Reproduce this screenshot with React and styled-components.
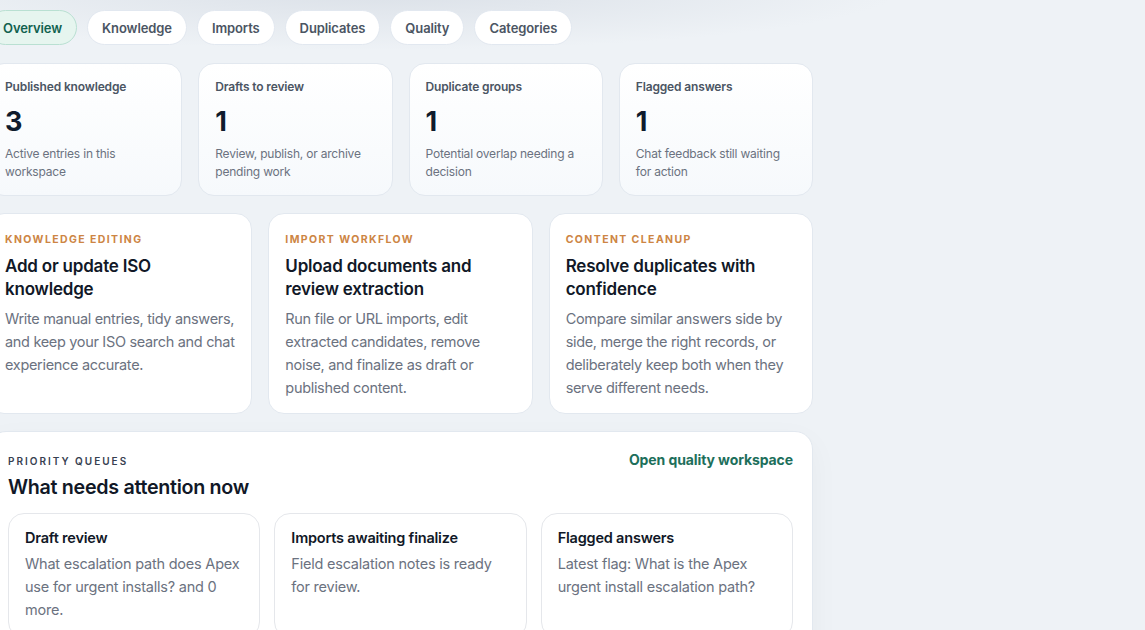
import React from "react";
import styled, { createGlobalStyle } from "styled-components";

const Global = createGlobalStyle`
  html, body { margin: 0; padding: 0; }
  body {
    background: #eef2f6;
    font-family: Inter, "Noto Sans", sans-serif;
    color: #0f172a;
    overflow: hidden;
    -webkit-font-smoothing: antialiased;
  }
  #root { min-height: 630px; }
`;

const Page = styled.div`
  min-height: 630px;
  background:
    radial-gradient(ellipse 520px 60px at 380px -10px, rgba(203, 210, 220, 0.55), rgba(238, 242, 246, 0) 100%),
    #eef2f6;
  padding-top: 10px;
  overflow: hidden;
`;

const Main = styled.main`
  width: 825px;
  margin-left: -12px;
  display: flex;
  flex-direction: column;
`;

const Tabs = styled.nav`
  display: flex;
  gap: 10px;
  margin-bottom: 18px;
`;

const Tab = styled.button`
  height: 35px;
  padding: 0 14px;
  border-radius: 999px;
  border: 1px solid ${(p) => (p.$active ? "#b9e0d2" : "#e2e8f0")};
  background: ${(p) => (p.$active ? "#e6f5ef" : "#ffffff")};
  color: ${(p) => (p.$active ? "#12624f" : "#4b5563")};
  font-family: Inter, sans-serif;
  font-size: 13px;
  font-weight: 600;
  letter-spacing: -0.1px;
  cursor: pointer;
`;

const StatGrid = styled.section`
  display: grid;
  grid-template-columns: repeat(4, 1fr);
  gap: 16px;
  margin-bottom: 17px;
`;

const StatCard = styled.div`
  border: 1px solid #e2e8ef;
  border-radius: 16px;
  background: linear-gradient(180deg, #ffffff 0%, #f6f9fc 100%);
  padding: 15px 16px 14px;
  display: flex;
  flex-direction: column;
`;

const StatLabel = styled.div`
  font-size: 12px;
  font-weight: 600;
  line-height: 16px;
  letter-spacing: -0.15px;
  color: #4b5563;
`;

const StatValue = styled.div`
  margin-top: 11px;
  font-size: 27px;
  font-weight: 700;
  line-height: 32px;
  color: #0f1b2d;
`;

const StatNote = styled.div`
  margin-top: 7px;
  font-size: 12px;
  line-height: 18px;
  letter-spacing: -0.2px;
  color: #6b7280;
`;

const ActionGrid = styled.section`
  display: grid;
  grid-template-columns: repeat(3, 1fr);
  gap: 16px;
  margin-bottom: 17px;
`;

const ActionCard = styled.div`
  border: 1px solid #e2e8ef;
  border-radius: 16px;
  background: #ffffff;
  padding: 18px 14px 14px 16px;
`;

const Eyebrow = styled.div`
  font-size: 10.5px;
  font-weight: 700;
  letter-spacing: 1.4px;
  line-height: 16px;
  text-transform: uppercase;
  color: ${(p) => p.$color || "#cd8544"};
`;

const ActionTitle = styled.h3`
  margin: 6.5px 0 0;
  font-size: 17px;
  font-weight: 600;
  line-height: 23px;
  letter-spacing: -0.2px;
  color: #111827;
`;

const Body = styled.p`
  margin: 6px 0 0;
  font-size: 14.5px;
  line-height: 23px;
  letter-spacing: -0.32px;
  color: #6b7280;
`;

const Panel = styled.section`
  border: 1px solid #e2e8ef;
  border-radius: 18px;
  background: #ffffff;
  padding: 21px 19px 20px 19px;
  box-shadow: 0 10px 30px rgba(15, 23, 42, 0.04);
`;

const PanelHead = styled.div`
  display: flex;
  justify-content: space-between;
  align-items: flex-start;
  margin-bottom: 13px;
`;

const PanelEyebrow = styled.div`
  font-size: 10px;
  font-weight: 600;
  letter-spacing: 2px;
  line-height: 16px;
  text-transform: uppercase;
  color: #374151;
`;

const PanelTitle = styled.h2`
  margin: 5px 0 0;
  font-size: 19.7px;
  font-weight: 600;
  line-height: 26px;
  letter-spacing: -0.3px;
  color: #111827;
`;

const PanelLink = styled.a`
  font-size: 14px;
  font-weight: 700;
  line-height: 18px;
  letter-spacing: -0.1px;
  color: #1d6f5b;
  text-decoration: none;
  margin-top: -2px;
`;

const QueueGrid = styled.div`
  display: grid;
  grid-template-columns: repeat(3, 1fr);
  gap: 14px;
`;

const QueueCard = styled.div`
  border: 1px solid #e5e7eb;
  border-radius: 16px;
  background: #ffffff;
  padding: 14px 16px 16px;
`;

const QueueTitle = styled.div`
  font-size: 14.5px;
  font-weight: 600;
  line-height: 20px;
  letter-spacing: -0.2px;
  color: #111827;
`;

const QueueBody = styled.p`
  margin: 4.5px 0 0;
  font-size: 14.5px;
  line-height: 23px;
  letter-spacing: -0.22px;
  color: #6b7280;
`;

const tabs = ["Overview", "Knowledge", "Imports", "Duplicates", "Quality", "Categories"];

const stats = [
  { label: "Published knowledge", value: "3", note: "Active entries in this workspace" },
  { label: "Drafts to review", value: "1", note: "Review, publish, or archive pending work" },
  { label: "Duplicate groups", value: "1", note: "Potential overlap needing a decision" },
  { label: "Flagged answers", value: "1", note: "Chat feedback still waiting for action" },
];

const actions = [
  {
    eyebrow: "Knowledge editing",
    title: "Add or update ISO knowledge",
    body: "Write manual entries, tidy answers, and keep your ISO search and chat experience accurate.",
  },
  {
    eyebrow: "Import workflow",
    title: "Upload documents and review extraction",
    body: "Run file or URL imports, edit extracted candidates, remove noise, and finalize as draft or published content.",
  },
  {
    eyebrow: "Content cleanup",
    title: "Resolve duplicates with confidence",
    body: "Compare similar answers side by side, merge the right records, or deliberately keep both when they serve different needs.",
  },
];

const queues = [
  { title: "Draft review", body: "What escalation path does Apex use for urgent installs? and 0 more." },
  { title: "Imports awaiting finalize", body: "Field escalation notes is ready for review." },
  { title: "Flagged answers", body: "Latest flag: What is the Apex urgent install escalation path?" },
];

export default function App() {
  return (
    <>
      <Global />
      <Page>
        <Main>
          <Tabs>
            {tabs.map((t, i) => (
              <Tab key={t} $active={i === 0}>
                {t}
              </Tab>
            ))}
          </Tabs>

          <StatGrid>
            {stats.map((s) => (
              <StatCard key={s.label}>
                <StatLabel>{s.label}</StatLabel>
                <StatValue>{s.value}</StatValue>
                <StatNote>{s.note}</StatNote>
              </StatCard>
            ))}
          </StatGrid>

          <ActionGrid>
            {actions.map((a) => (
              <ActionCard key={a.title}>
                <Eyebrow>{a.eyebrow}</Eyebrow>
                <ActionTitle>{a.title}</ActionTitle>
                <Body>{a.body}</Body>
              </ActionCard>
            ))}
          </ActionGrid>

          <Panel>
            <PanelHead>
              <div>
                <PanelEyebrow>Priority queues</PanelEyebrow>
                <PanelTitle>What needs attention now</PanelTitle>
              </div>
              <PanelLink href="#">Open quality workspace</PanelLink>
            </PanelHead>
            <QueueGrid>
              {queues.map((q) => (
                <QueueCard key={q.title}>
                  <QueueTitle>{q.title}</QueueTitle>
                  <QueueBody>{q.body}</QueueBody>
                </QueueCard>
              ))}
            </QueueGrid>
          </Panel>
        </Main>
      </Page>
    </>
  );
}
